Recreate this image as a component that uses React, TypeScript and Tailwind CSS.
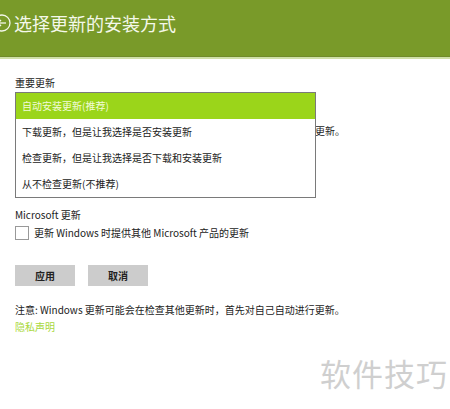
import React from "react";

const font = { fontFamily: '"Noto Sans CJK SC", "Noto Sans", sans-serif' };

export default function App() {
  return (
    <div className="w-[450px] h-[409px] bg-white overflow-hidden relative text-[#222]" style={font}>
      <div className="h-[56px] bg-[#799a29] flex items-center pl-[14px] relative">
        <svg className="absolute left-[-7px] top-[14px]" width="18" height="18" viewBox="0 0 18 18">
          <circle cx="9" cy="9" r="8" fill="none" stroke="#f4f8ea" strokeWidth="1.3" />
          <path d="M5 9h8" stroke="#f4f8ea" strokeWidth="1.3" />
          <path d="M8 6l-3 3 3 3" stroke="#f4f8ea" strokeWidth="1.3" fill="none" />
        </svg>
        <span className="text-[18px] text-[#f4f8ea] leading-none mt-[-10px]">选择更新的安装方式</span>
      </div>
      <div className="h-[1px] bg-[#6f8b2a]" />
      <div className="h-[2px] bg-[#cfe0a8]" />
      <div className="pl-[15px] pt-[18px] text-[10px] leading-none">
        <div className="h-[12px] flex items-center">重要更新</div>
        <div className="mt-[36px] h-[12px] flex items-center pl-[300px] whitespace-nowrap">更新。</div>
        <div className="mt-[72px] h-[12px] flex items-center">Microsoft 更新</div>
        <div className="mt-[5px] flex items-center gap-[5px]">
          <div className="w-[14px] h-[14px] border border-[#999] bg-white" />
          <span>更新 Windows 时提供其他 Microsoft 产品的更新</span>
        </div>
        <div className="mt-[25px] flex gap-[13px]">
          <div className="w-[60px] h-[21px] bg-[#cccccc] flex items-center justify-center font-bold">应用</div>
          <div className="w-[60px] h-[21px] bg-[#cccccc] flex items-center justify-center font-bold">取消</div>
        </div>
        <div className="mt-[18px] h-[12px] flex items-center whitespace-nowrap">注意: Windows 更新可能会在检查其他更新时，首先对自己自动进行更新。</div>
        <div className="mt-[5px] h-[12px] flex items-center text-[#a9d83c]">隐私声明</div>
      </div>
      <div className="absolute left-[15px] top-[92px] w-[301px] h-[106px] border border-[#7a7a7a] bg-white text-[10px] leading-none flex flex-col">
        <div className="h-[26px] bg-[#9bd51a] text-[#f2fbd8] flex items-center pl-[6px]">自动安装更新(推荐)</div>
        <div className="h-[26px] flex items-center pl-[6px]">下载更新，但是让我选择是否安装更新</div>
        <div className="h-[26px] flex items-center pl-[6px]">检查更新，但是让我选择是否下载和安装更新</div>
        <div className="h-[26px] flex items-center pl-[6px]">从不检查更新(不推荐)</div>
      </div>
      <div className="absolute left-[320px] top-[357px] text-[31px] leading-none text-[#cfcfcf] tracking-[1px]">软件技巧</div>
    </div>
  );
}
